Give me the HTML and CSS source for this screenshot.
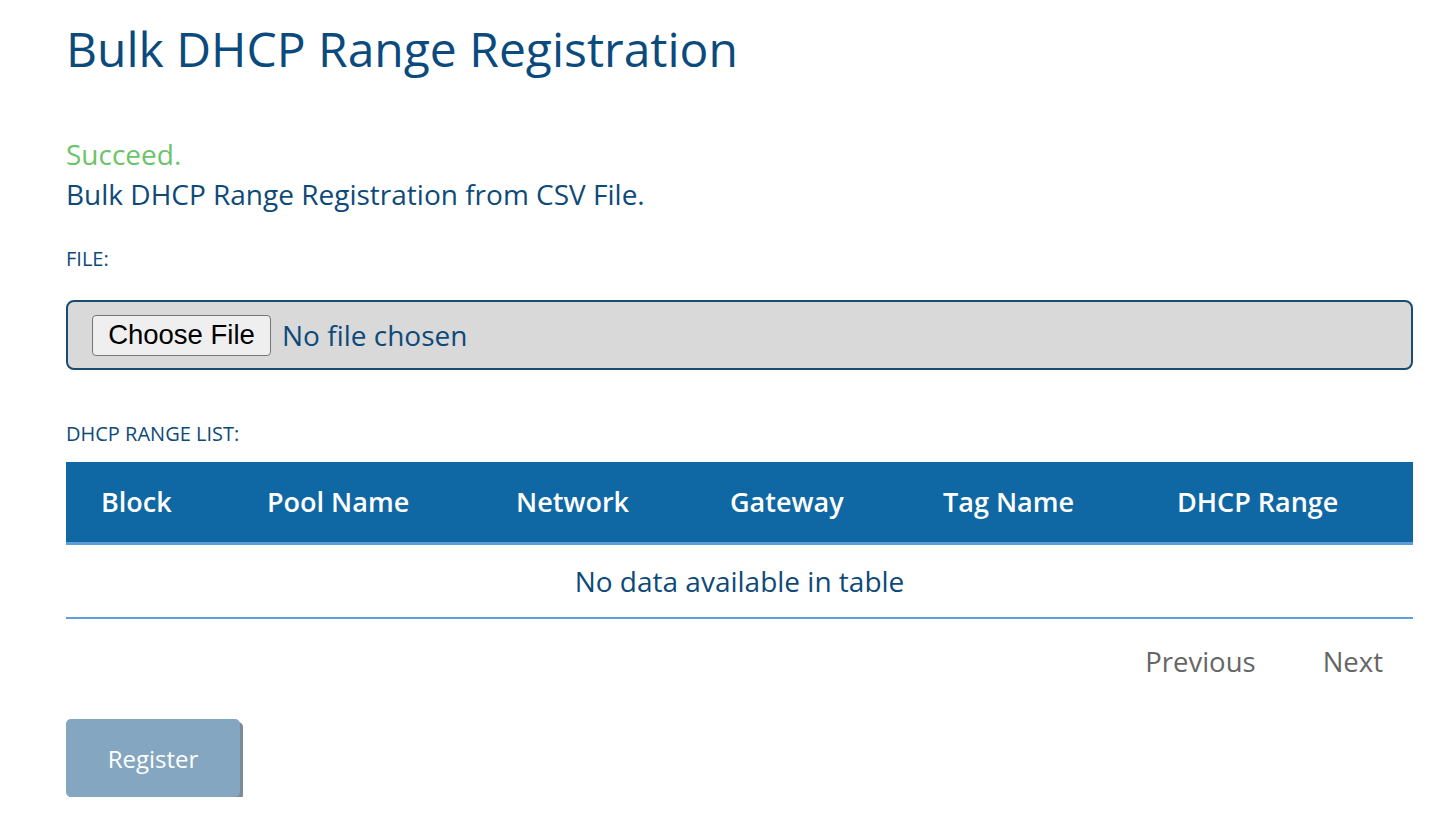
FILE: index.html
```html
<!DOCTYPE html>
<html lang="en">
<head>
<meta charset="utf-8">
<title>Bulk DHCP Range Registration</title>
<link rel="stylesheet" href="styles.css">
</head>
<body>
<main class="page">
  <h1 class="title">Bulk DHCP Range Registration</h1>

  <div class="notice">
    <p class="notice-ok">Succeed.</p>
    <p class="notice-text">Bulk DHCP Range Registration from CSV File.</p>
  </div>

  <div class="field">
    <div class="field-label">FILE:</div>
    <label class="file-box">
      <span class="file-btn">Choose File</span>
      <span class="file-name">No file chosen</span>
      <input class="file-input" type="file" accept=".csv">
    </label>
  </div>

  <div class="field field-list">
    <div class="field-label">DHCP RANGE LIST:</div>
    <table class="grid">
      <colgroup>
        <col class="c1"><col class="c2"><col class="c3"><col class="c4"><col class="c5"><col class="c6">
      </colgroup>
      <thead>
        <tr>
          <th>Block</th>
          <th>Pool Name</th>
          <th>Network</th>
          <th>Gateway</th>
          <th>Tag Name</th>
          <th>DHCP Range</th>
        </tr>
      </thead>
      <tbody>
        <tr><td class="empty" colspan="6">No data available in table</td></tr>
      </tbody>
    </table>
    <div class="pager">
      <a class="pager-btn">Previous</a>
      <a class="pager-btn">Next</a>
    </div>
  </div>

  <button class="register" type="button" disabled>Register</button>
</main>
</body>
</html>
```
FILE: styles.css
```css
* { box-sizing: border-box; }

html, body {
  margin: 0;
  background: #ffffff;
}

body {
  font-family: "Open Sans", "Noto Sans", sans-serif;
  color: #0e4a79;
}

.page {
  padding: 20px 35px 0 66px;
}

.title {
  margin: 0;
  font-size: 48px;
  line-height: 58px;
  font-weight: 400;
  color: #0b4a7d;
}

.notice {
  margin-top: 56px;
}

.notice p {
  margin: 0;
  font-size: 28px;
  line-height: 40px;
}

.notice-ok { color: #6cc46a; }
.notice-text { color: #0e4a79; }

.field { margin-top: 31px; }
.field-list { margin-top: 50px; }

.field-label {
  font-size: 20px;
  line-height: 28px;
  color: #0e4a79;
}

.file-box {
  margin-top: 27px;
  height: 70px;
  display: flex;
  align-items: center;
  padding: 0 24px;
  background: #d9d9d9;
  border: 2px solid #1a4b72;
  border-radius: 8px;
}

.file-btn {
  display: inline-flex;
  align-items: center;
  justify-content: center;
  height: 41px;
  width: 179px;
  padding: 0 12px;
  background: #efefef;
  border: 1px solid #767676;
  border-radius: 4px;
  font-family: "Liberation Sans", Arial, sans-serif;
  font-size: 27.5px;
  color: #000;
}

.file-name {
  margin-left: 11px;
  font-size: 28px;
  color: #0e4a79;
}

.file-input { display: none; }

.grid {
  margin-top: 14px;
  width: 100%;
  border-collapse: collapse;
  table-layout: fixed;
}

.c1 { width: 166px; }
.c2 { width: 249px; }
.c3 { width: 214px; }
.c4 { width: 213px; }
.c5 { width: 234px; }
.c6 { width: 271px; }

.grid th {
  background: #0f68a3;
  color: #ffffff;
  font-size: 27px;
  line-height: 40px;
  font-weight: 600;
  text-align: left;
  padding: 20px 0 20px 35px;
  border-bottom: 3px solid #5e9fda;
}

.grid td.empty {
  text-align: center;
  font-size: 28px;
  line-height: 40px;
  padding: 16px 0;
  color: #0e4a79;
  border-bottom: 2px solid #5e9fda;
}

.pager {
  margin-top: 23px;
  display: flex;
  justify-content: flex-end;
  gap: 7px;
}

.pager-btn {
  padding: 0 30px;
  font-size: 27.5px;
  line-height: 40px;
  color: #666666;
  cursor: default;
}

.register {
  margin-top: 37px;
  display: block;
  width: 174px;
  height: 78px;
  padding: 0;
  background: #84a6c0;
  border: none;
  border-radius: 5px;
  box-shadow: 3px 3px 0 #7c8a97;
  font-family: "Open Sans", sans-serif;
  font-size: 24px;
  font-weight: 500;
  color: #ffffff;
}
```
